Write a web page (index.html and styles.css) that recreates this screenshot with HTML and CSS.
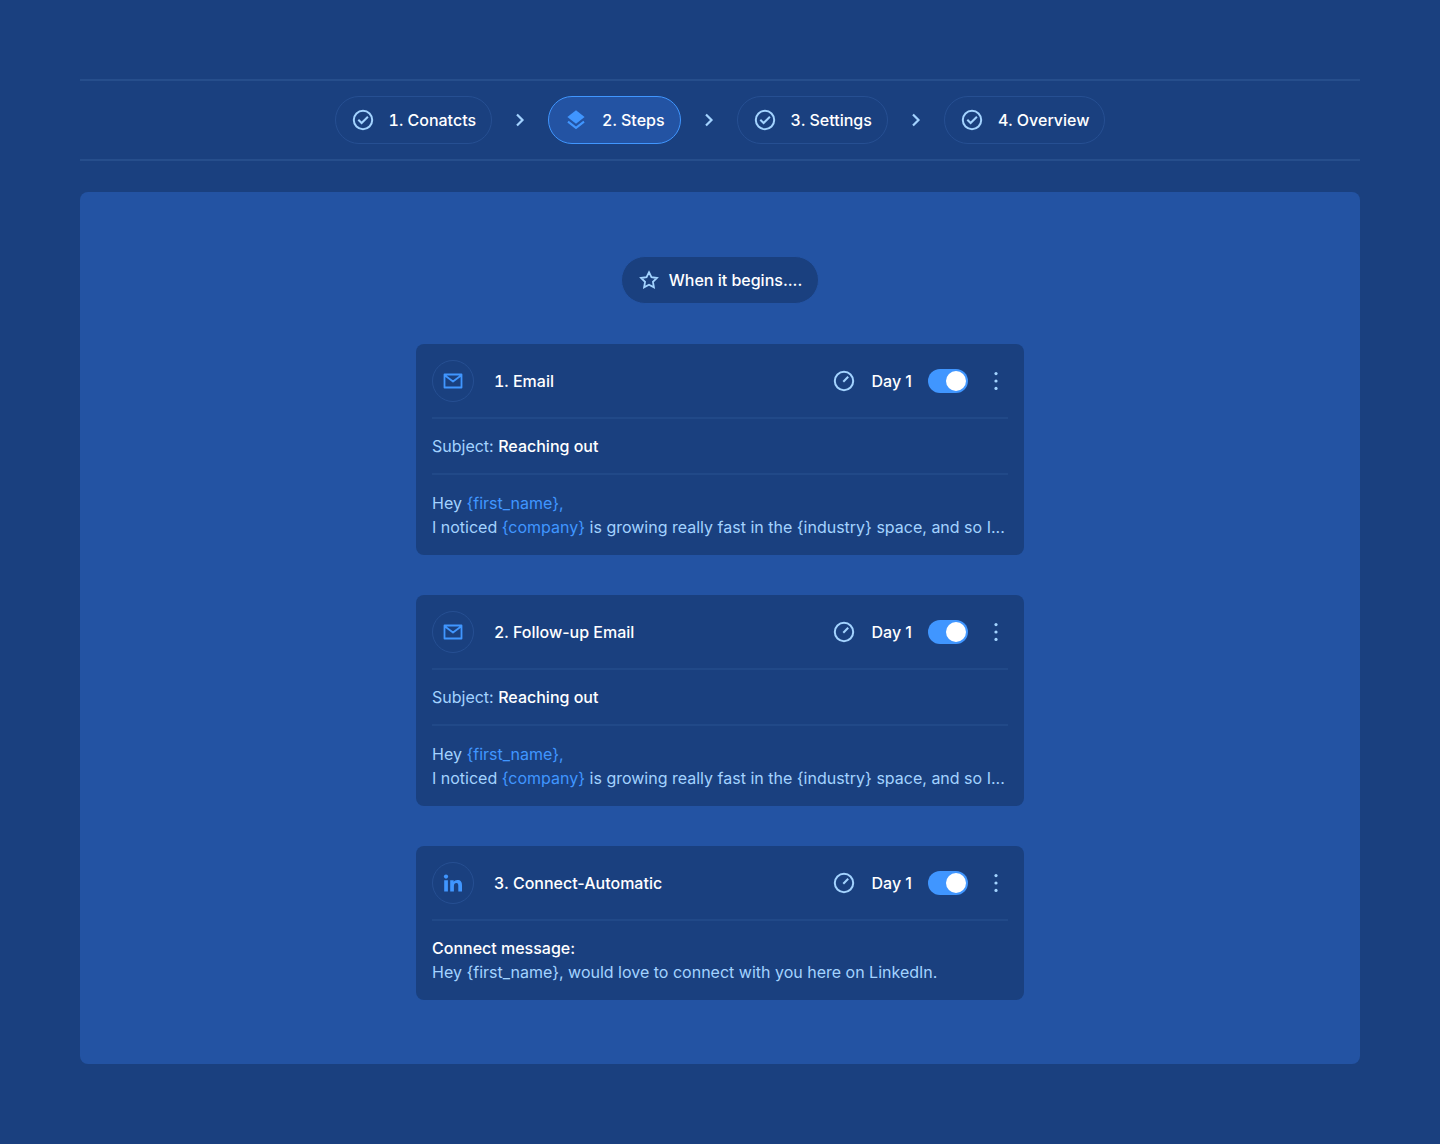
FILE: index.html
```html
<!DOCTYPE html>
<html lang="en">
<head>
<meta charset="utf-8">
<meta name="viewport" content="width=device-width, initial-scale=1">
<title>Campaign steps</title>
<link rel="stylesheet" href="styles.css">
</head>
<body>
<svg class="sprite" aria-hidden="true">
  <symbol id="check" viewBox="0 0 24 24"><circle cx="12" cy="12" r="9.2" fill="none" stroke="currentColor" stroke-width="2"/><path d="M7.300 11.700l3.300 3.300 6.300-6.300" fill="none" stroke="currentColor" stroke-width="2"/></symbol>
  <symbol id="layers" viewBox="0 0 24 24"><path d="M12 2.200l8.600 6.800-8.600 6.800-8.600-6.800z" fill="currentColor"/><path d="M4 13.700L12 19.900l8-6.200" fill="none" stroke="currentColor" stroke-width="2.100"/></symbol>
  <symbol id="chevron" viewBox="0 0 24 24"><path d="M9 6.500l5.500 5.500L9 17.500" fill="none" stroke="currentColor" stroke-width="2.200"/></symbol>
  <symbol id="star" viewBox="0 0 24 24"><path d="M12 4.200l2.450 5 5.500.8-4 3.850.95 5.450L12 16.700l-4.900 2.600.95-5.450-4-3.850 5.500-.8z" fill="none" stroke="currentColor" stroke-width="1.800"/></symbol>
  <symbol id="mail" viewBox="0 0 24 24"><path d="M3.500 5.500h17v13h-17zM4 6.500l8 6 8-6" fill="none" stroke="currentColor" stroke-width="1.800" stroke-linejoin="round"/></symbol>
  <symbol id="linkedin" viewBox="0 0 24 24"><circle cx="5" cy="5.600" r="2.100" fill="currentColor"/><path d="M3.200 9.300h3.700v11.200H3.200zM9.200 9.300h3.500v1.600c.7-1.200 1.900-1.900 3.600-1.900 3.500 0 4.700 2 4.700 5.300v6.200h-3.700v-5.600c0-1.700-.4-2.800-1.900-2.800-1.700 0-2.500 1.100-2.500 2.900v5.500H9.200z" fill="currentColor"/></symbol>
  <symbol id="timer" viewBox="0 0 24 24"><circle cx="12" cy="12" r="9.200" fill="none" stroke="currentColor" stroke-width="2"/><path d="M11.300 12.700l4.900-4.900" fill="none" stroke="currentColor" stroke-width="2"/></symbol>
  <symbol id="dots" viewBox="0 0 24 24"><g fill="currentColor"><circle cx="12" cy="4.600" r="1.600"/><circle cx="12" cy="12" r="1.600"/><circle cx="12" cy="19.400" r="1.600"/></g></symbol>
</svg>
<div class="page">
  <nav class="stepper" aria-label="Campaign setup">
    <button class="step"><svg class="icon"><use href="#check"/></svg>1. Conatcts</button>
    <svg class="icon arrow"><use href="#chevron"/></svg>
    <button class="step step-active" aria-current="step"><svg class="icon"><use href="#layers"/></svg>2. Steps</button>
    <svg class="icon arrow"><use href="#chevron"/></svg>
    <button class="step"><svg class="icon"><use href="#check"/></svg>3. Settings</button>
    <svg class="icon arrow"><use href="#chevron"/></svg>
    <button class="step"><svg class="icon"><use href="#check"/></svg>4. Overview</button>
  </nav>
  <main class="panel">
    <button class="trigger"><svg class="icon"><use href="#star"/></svg>When it begins....</button>

    <article class="card">
      <header class="card-head">
        <span class="badge"><svg class="icon"><use href="#mail"/></svg></span>
        <h2 class="title"><span class="number">1.</span> Email</h2>
        <div class="controls">
          <svg class="icon"><use href="#timer"/></svg>
          <span class="day">Day 1</span>
          <input class="toggle" type="checkbox" checked aria-label="Enable Email">
          <button class="more" aria-label="More options"><svg class="icon"><use href="#dots"/></svg></button>
        </div>
      </header>
      <p class="subject">Subject: <strong>Reaching out</strong></p>
      <p class="message">Hey <span class="token">{first_name},</span><br>I noticed <span class="token">{company}</span> is growing really fast in the {industry} space, and so I...</p>
    </article>

    <article class="card">
      <header class="card-head">
        <span class="badge"><svg class="icon"><use href="#mail"/></svg></span>
        <h2 class="title"><span class="number">2.</span> Follow-up Email</h2>
        <div class="controls">
          <svg class="icon"><use href="#timer"/></svg>
          <span class="day">Day 1</span>
          <input class="toggle" type="checkbox" checked aria-label="Enable Follow-up Email">
          <button class="more" aria-label="More options"><svg class="icon"><use href="#dots"/></svg></button>
        </div>
      </header>
      <p class="subject">Subject: <strong>Reaching out</strong></p>
      <p class="message">Hey <span class="token">{first_name},</span><br>I noticed <span class="token">{company}</span> is growing really fast in the {industry} space, and so I...</p>
    </article>

    <article class="card">
      <header class="card-head">
        <span class="badge"><svg class="icon"><use href="#linkedin"/></svg></span>
        <h2 class="title"><span class="number">3.</span> Connect-Automatic</h2>
        <div class="controls">
          <svg class="icon"><use href="#timer"/></svg>
          <span class="day">Day 1</span>
          <input class="toggle" type="checkbox" checked aria-label="Enable Connect-Automatic">
          <button class="more" aria-label="More options"><svg class="icon"><use href="#dots"/></svg></button>
        </div>
      </header>
      <p class="message"><strong>Connect message:</strong><br>Hey {first_name}, would love to connect with you here on LinkedIn.</p>
    </article>
  </main>
</div>
</body>
</html>
```
FILE: styles.css
```css
:root {
  --navy: #1a407f;
  --panel: #2353a3;
  --line: #264e8c;
  --line-soft: #214988;
  --outline: #264f92;
  --accent: #4096ff;
  --pale: #a3d3ff;
}

* { box-sizing: border-box; }

body {
  margin: 0;
  background: var(--navy);
  color: #fff;
  font: 400 16px/24px Inter, "Liberation Sans", sans-serif;
}

button {
  font: inherit;
  font-weight: 500;
  color: inherit;
  cursor: pointer;
}

h2, p { margin: 0; }
strong { font-weight: 500; color: #fff; }

.sprite {
  display: block;
  width: 0;
  height: 0;
}

.icon {
  display: block;
  flex: none;
  width: 24px;
  height: 24px;
  color: var(--pale);
}

.page { padding: 79px 80px 80px; }

.stepper {
  display: flex;
  justify-content: center;
  align-items: center;
  gap: 16px;
  margin-bottom: 31px;
  padding: 15px 0;
  border-top: 2px solid var(--line);
  border-bottom: 2px solid var(--line);
}

.step {
  display: flex;
  align-items: center;
  gap: 14px;
  height: 48px;
  padding: 0 15px;
  border: 1px solid var(--outline);
  border-radius: 24px;
  background: none;
  font-variant-numeric: tabular-nums;
  white-space: nowrap;
}

.step-active {
  border-color: var(--accent);
  background: var(--panel);
}

.step-active .icon { color: var(--accent); }

.panel {
  display: flex;
  flex-direction: column;
  align-items: center;
  gap: 40px;
  padding: 64px 16px;
  border-radius: 8px;
  background: var(--panel);
}

.trigger {
  display: flex;
  align-items: center;
  gap: 8px;
  height: 48px;
  padding: 0 16px 0 15px;
  border: 1px solid var(--panel);
  border-radius: 24px;
  background: var(--navy);
}

.card {
  width: 100%;
  max-width: 608px;
  border-radius: 8px;
  padding: 16px;
  background: var(--navy);
}

.card-head {
  display: flex;
  align-items: center;
  gap: 20px;
  padding-bottom: 15px;
  border-bottom: 2px solid var(--line-soft);
}

.badge {
  display: grid;
  place-items: center;
  width: 42px;
  height: 42px;
  border: 1px solid var(--outline);
  border-radius: 50%;
}

.badge .icon { color: var(--accent); }

.title {
  font-size: 16px;
  font-weight: 500;
}

.number { font-variant-numeric: tabular-nums; }

.controls {
  display: flex;
  align-items: center;
  gap: 16px;
  margin-left: auto;
}

.day { font-weight: 500; }

.toggle {
  appearance: none;
  display: flex;
  align-items: center;
  width: 40px;
  height: 24px;
  margin: 0;
  padding: 0 2px;
  border-radius: 12px;
  background: var(--line);
  cursor: pointer;
}

.toggle::before {
  content: "";
  width: 20px;
  height: 20px;
  border-radius: 50%;
  background: #fff;
}

.toggle:checked {
  justify-content: flex-end;
  background: var(--accent);
}

.more {
  padding: 0;
  border: 0;
  background: none;
}

.subject {
  padding: 15px 0;
  border-bottom: 2px solid var(--line-soft);
  color: var(--pale);
}

.message {
  padding-top: 16px;
  color: var(--pale);
}

.card-head + .message { padding-top: 15px; }

.token { color: var(--accent); }
```
